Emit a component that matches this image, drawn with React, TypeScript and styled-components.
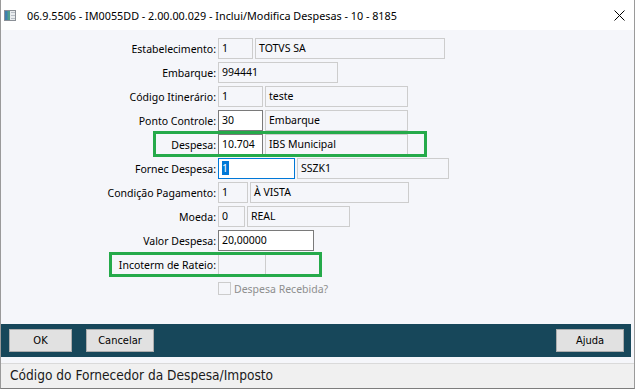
import React from "react";
import styled, { createGlobalStyle, css } from "styled-components";

const UI = `"Noto Sans", "Open Sans", sans-serif`;
const NARROW = `"DejaVu Sans Condensed", "DejaVu Sans", sans-serif`;

const GlobalStyle = createGlobalStyle`
  html, body { margin: 0; padding: 0; background: #ffffff; }
  body { width: 636px; height: 390px; overflow: hidden; }
  *, *::before, *::after { box-sizing: border-box; }
`;

const Window = styled.div`
  width: 635px;
  height: 389px;
  display: flex;
  flex-direction: column;
  background: #f5f6fa;
  border-left: 1px solid #9a9a9a;
  border-right: 1px solid #9a9a9a;
  border-bottom: 1px solid #7d7d7d;
`;

const TitleBar = styled.div`
  flex: none;
  height: 30px;
  display: flex;
  align-items: center;
  padding: 0 9px 0 3px;
  background: #ffffff;
  font-family: ${UI};
  font-size: 10.8px;
  color: #000;
`;

const TitleText = styled.span`
  flex: 1;
  margin-left: 11px;
  white-space: nowrap;
`;

const Form = styled.div`
  flex: 1;
  display: flex;
  flex-direction: column;
  gap: 3px;
  padding-top: 8px;
  font-family: ${UI};
  font-size: 10.5px;
  color: #000;
`;

type Hl = { left: number; width: number; top: number; bottom: number };

const Row = styled.div<{ $hl?: Hl }>`
  position: relative;
  display: flex;
  align-items: center;
  gap: 2px;
  height: 21px;
  ${(p) =>
    p.$hl &&
    css`
      &::after {
        content: "";
        position: absolute;
        left: ${p.$hl.left}px;
        width: ${p.$hl.width}px;
        top: ${p.$hl.top}px;
        bottom: ${p.$hl.bottom}px;
        border: 3px solid #25aa4a;
        pointer-events: none;
      }
    `}
`;

const Label = styled.label`
  width: 215px;
  text-align: right;
  white-space: nowrap;
`;

type Variant = "ro" | "edit" | "focus";

const Field = styled.div<{ $w: number; $v?: Variant }>`
  width: ${(p) => p.$w}px;
  height: 21px;
  padding-left: 3px;
  line-height: 19px;
  white-space: nowrap;
  overflow: hidden;
  border: 1px solid #cdcdcd;
  background: #f5f6fa;
  ${(p) =>
    p.$v === "edit" &&
    css`
      border-color: #7a7a7a;
      background: #ffffff;
    `}
  ${(p) =>
    p.$v === "focus" &&
    css`
      border-color: #0078d7;
      background: #ffffff;
    `}
`;

const Selected = styled.span`
  background: #0078d7;
  color: #ffffff;
  padding: 0 1px 0 0;
`;

const CheckBox = styled.span`
  width: 13px;
  height: 13px;
  border: 1px solid #cccccc;
  background: #f5f6fa;
`;

const CheckLabel = styled.span`
  margin-left: 1px;
  color: #8e8e8e;
`;

const Toolbar = styled.div`
  flex: none;
  height: 33px;
  margin-right: 3px;
  padding: 5px 7px 0 8px;
  display: flex;
  align-items: flex-start;
  gap: 14px;
  background: #17475a;
`;

const Button = styled.button<{ $w: number }>`
  width: ${(p) => p.$w}px;
  height: 23px;
  margin: 0;
  padding: 0;
  border: 1px solid #adadad;
  background: #e1e1e1;
  font-family: ${NARROW};
  font-stretch: condensed;
  font-size: 11px;
  color: #000;
`;

const Spacer = styled.div`
  flex: 1;
`;

const StatusBar = styled.div`
  flex: none;
  height: 25px;
  margin-top: 6px;
  padding-left: 9px;
  border-top: 1px solid #dadada;
  background: #f0f0f0;
  font-family: ${NARROW};
  font-stretch: condensed;
  font-size: 13.6px;
  line-height: 23px;
  color: #1a1a1a;
  white-space: nowrap;
`;

const AppIcon = () => (
  <svg width="12" height="11" viewBox="0 0 12 11">
    <rect x="0.5" y="0.5" width="11" height="10" fill="#e9ecef" stroke="#8a8f96" />
    <rect x="1" y="1" width="5" height="9" fill="#4e9d8c" />
    <rect x="1" y="1" width="2.5" height="9" fill="#3e7fae" />
    <rect x="7" y="2" width="4" height="1" fill="#b8bec6" />
    <rect x="7" y="5" width="4" height="1" fill="#b8bec6" />
    <rect x="7" y="8" width="4" height="1" fill="#b8bec6" />
  </svg>
);

const CloseIcon = () => (
  <svg width="11" height="11" viewBox="0 0 11 11">
    <path d="M0.5 0.5 L10.5 10.5 M10.5 0.5 L0.5 10.5" stroke="#000" strokeWidth="1" fill="none" />
  </svg>
);

export default function App() {
  return (
    <>
      <GlobalStyle />
      <Window>
        <TitleBar>
          <AppIcon />
          <TitleText>06.9.5506 - IM0055DD - 2.00.00.029 - Inclui/Modifica Despesas - 10 - 8185</TitleText>
          <CloseIcon />
        </TitleBar>
        <Form>
          <Row>
            <Label>Estabelecimento:</Label>
            <Field $w={35}>1</Field>
            <Field $w={190}>TOTVS SA</Field>
          </Row>
          <Row>
            <Label>Embarque:</Label>
            <Field $w={120}>994441</Field>
          </Row>
          <Row>
            <Label>Código Itinerário:</Label>
            <Field $w={45}>1</Field>
            <Field $w={143}>teste</Field>
          </Row>
          <Row>
            <Label>Ponto Controle:</Label>
            <Field $w={45} $v="edit">30</Field>
            <Field $w={143}>Embarque</Field>
          </Row>
          <Row $hl={{ left: 152, width: 274, top: -3, bottom: -2 }}>
            <Label>Despesa:</Label>
            <Field $w={45} $v="edit">10.704</Field>
            <Field $w={143}>IBS Municipal</Field>
          </Row>
          <Row>
            <Label>Fornec Despesa:</Label>
            <Field $w={77} $v="focus">
              <Selected>1</Selected>
            </Field>
            <Field $w={152}>SSZK1</Field>
          </Row>
          <Row>
            <Label>Condição Pagamento:</Label>
            <Field $w={30}>1</Field>
            <Field $w={159}>À VISTA</Field>
          </Row>
          <Row>
            <Label>Moeda:</Label>
            <Field $w={27}>0</Field>
            <Field $w={103}>REAL</Field>
          </Row>
          <Row>
            <Label>Valor Despesa:</Label>
            <Field $w={96} $v="edit">20,00000</Field>
          </Row>
          <Row $hl={{ left: 108, width: 213, top: -2, bottom: -2 }}>
            <Label>Incoterm de Rateio:</Label>
            <Field $w={48}></Field>
          </Row>
          <Row>
            <Label />
            <CheckBox />
            <CheckLabel>Despesa Recebida?</CheckLabel>
          </Row>
        </Form>
        <Toolbar>
          <Button $w={63}>OK</Button>
          <Button $w={68}>Cancelar</Button>
          <Spacer />
          <Button $w={68}>Ajuda</Button>
        </Toolbar>
        <StatusBar>Código do Fornecedor da Despesa/Imposto</StatusBar>
      </Window>
    </>
  );
}
